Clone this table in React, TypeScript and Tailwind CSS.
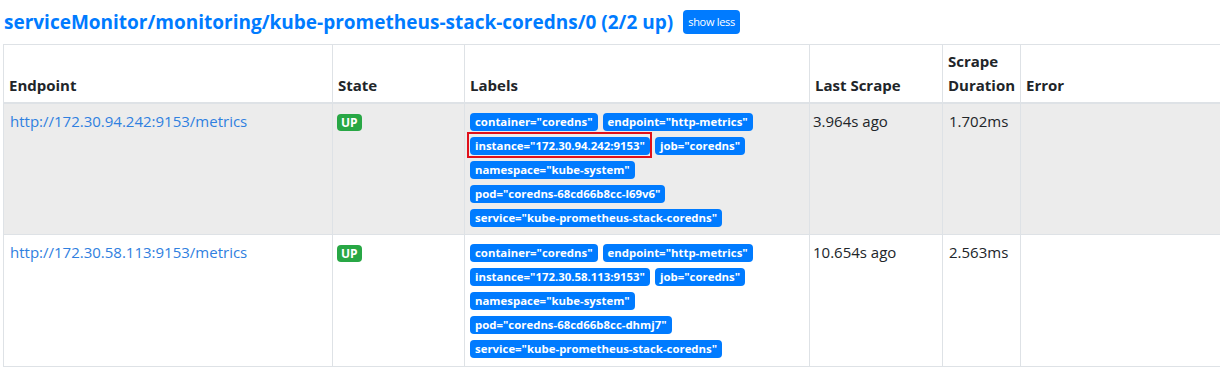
import React from "react";

const font = { fontFamily: '"Open Sans", "Noto Sans", sans-serif' };

function Badge({ children, boxed }: { children: React.ReactNode; boxed?: boolean }) {
  return (
    <span className="relative inline-block rounded-[4px] bg-[#007bff] px-[5px] text-[11.4px] font-bold leading-[18px] text-white whitespace-nowrap">
      {children}
      {boxed && (
        <span className="absolute left-[-3px] right-[-2px] top-[-5px] bottom-[-3px] border-2 border-[#e0101a]" />
      )}
    </span>
  );
}

type Row = {
  url: string;
  labels: { text: string; boxed?: boolean }[][];
  last: string;
  dur: string;
  striped: boolean;
};

const rows: Row[] = [
  {
    url: "http://172.30.94.242:9153/metrics",
    labels: [
      [{ text: 'container="coredns"' }, { text: 'endpoint="http-metrics"' }],
      [{ text: 'instance="172.30.94.242:9153"', boxed: true }, { text: 'job="coredns"' }],
      [{ text: 'namespace="kube-system"' }],
      [{ text: 'pod="coredns-68cd66b8cc-l69v6"' }],
      [{ text: 'service="kube-prometheus-stack-coredns"' }],
    ],
    last: "3.964s ago",
    dur: "1.702ms",
    striped: true,
  },
  {
    url: "http://172.30.58.113:9153/metrics",
    labels: [
      [{ text: 'container="coredns"' }, { text: 'endpoint="http-metrics"' }],
      [{ text: 'instance="172.30.58.113:9153"' }, { text: 'job="coredns"' }],
      [{ text: 'namespace="kube-system"' }],
      [{ text: 'pod="coredns-68cd66b8cc-dhmj7"' }],
      [{ text: 'service="kube-prometheus-stack-coredns"' }],
    ],
    last: "10.654s ago",
    dur: "2.563ms",
    striped: false,
  },
];

export default function App() {
  return (
    <div className="w-[1220px] h-[368px] overflow-hidden bg-white text-[#212529]" style={font}>
      <div className="flex items-center h-[44px] pl-[4px] pb-[1px]">
        <h2 className="text-[19px] font-bold text-[#007bff] leading-[24px]">
          serviceMonitor/monitoring/kube-prometheus-stack-coredns/0 (2/2 up)
        </h2>
        <button className="ml-[10px] rounded-[4px] bg-[#007bff] px-[5px] h-[24px] text-[11px] tracking-[-0.3px] text-white leading-[24px]">
          show less
        </button>
      </div>
      <table className="ml-[3px] w-[1230px] table-fixed border-collapse text-[15px] leading-[24px]">
        <colgroup>
          <col className="w-[329px]" />
          <col className="w-[132px]" />
          <col className="w-[345px]" />
          <col className="w-[133px]" />
          <col className="w-[78px]" />
          <col />
        </colgroup>
        <thead>
          <tr className="h-[58px]">
            {["Endpoint", "State", "Labels", "Last Scrape", "Scrape Duration", "Error"].map((h) => (
              <th
                key={h}
                className="border border-[#dee2e6] border-b-2 px-[5px] pb-[5px] align-bottom text-left font-bold"
              >
                {h === "Scrape Duration" ? (
                  <>
                    Scrape
                    <br />
                    Duration
                  </>
                ) : (
                  h
                )}
              </th>
            ))}
          </tr>
        </thead>
        <tbody>
          {rows.map((r) => (
            <tr key={r.url} className={r.striped ? "bg-[#ececec] h-[132px]" : "bg-white h-[132px]"}>
              <td className="border border-[#dee2e6] px-[6px] pt-[5px] align-top">
                <a className="text-[#2f80e0]">{r.url}</a>
              </td>
              <td className="border border-[#dee2e6] px-[4px] pt-[10px] align-top">
                <span className="block w-fit rounded-[4px] bg-[#28a745] px-[4px] text-[12px] font-bold leading-[17px] text-white">
                  UP
                </span>
              </td>
              <td className="border border-[#dee2e6] px-[5px] pt-[9px] align-top">
                <div className="flex flex-col gap-[6px]">
                  {r.labels.map((line, i) => (
                    <div key={i} className="flex gap-[5px]">
                      {line.map((l) => (
                        <Badge key={l.text} boxed={l.boxed}>
                          {l.text}
                        </Badge>
                      ))}
                    </div>
                  ))}
                </div>
              </td>
              <td className="border border-[#dee2e6] px-[3px] pt-[5px] align-top">{r.last}</td>
              <td className="border border-[#dee2e6] px-[6px] pt-[5px] align-top">{r.dur}</td>
              <td className="border border-[#dee2e6] px-[5px] pt-[5px] align-top"></td>
            </tr>
          ))}
        </tbody>
      </table>
    </div>
  );
}
